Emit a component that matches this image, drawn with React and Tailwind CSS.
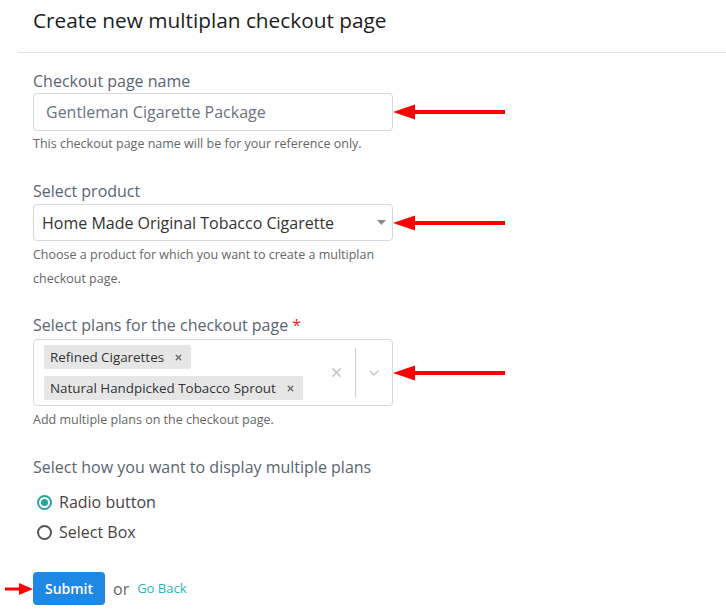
import { X, ChevronDown } from "lucide-react";

function Arrow({ width = 112 }) {
    return (
        <svg width={width} height="18" viewBox={`0 0 ${width} 18`} className="shrink-0">
            <path d={`M0 9 L22 1.5 L22 7 L${width} 7 L${width} 11 L22 11 L22 16.5 Z`} fill="#ff0000" />
        </svg>
    );
}

function Tag({ children }) {
    return (
        <div className="flex items-center bg-[#e6e6e6] rounded-[2px] h-[24px] pl-[6px] pr-[8px] text-[13.4px] leading-[24px] text-[#333]">
            <span>{children}</span>
            <X size={9} strokeWidth={3.5} className="ml-[10px] text-[#666]" />
        </div>
    );
}

export default function App() {
    return (
        <div className="w-[726px] h-[609px] bg-white overflow-hidden font-['Open_Sans',sans-serif]">
            <div className="pl-[33px] pt-[7px] h-[52px] text-[20.8px] leading-[26px] text-[#1a1d21]">
                Create new multiplan checkout page
            </div>
            <div className="ml-[18px] border-t border-[#e3e3e3]" />

            <div className="pl-[33px] pt-[18px]">
                <div className="text-[16px] text-[#5a6470] leading-[20px]">Checkout page name</div>
                <div className="flex items-center mt-[2px]">
                    <div className="w-[360px] h-[38px] border border-[#d9d9d9] rounded-[4px] flex items-center pl-[12px] text-[16px] text-[#6b7380]">
                        Gentleman Cigarette Package
                    </div>
                    <Arrow />
                </div>
                <div className="text-[12.5px] text-[#666] mt-[4px] leading-[18px]">
                    This checkout page name will be for your reference only.
                </div>

                <div className="text-[16px] text-[#5a6470] leading-[20px] mt-[28px]">Select product</div>
                <div className="flex items-center mt-[3px]">
                    <div className="w-[360px] h-[37px] border border-[#d9d9d9] rounded-[4px] flex items-center justify-between pl-[8px] pr-[6px] text-[16px] text-[#333]">
                        <span>Home Made Original Tobacco Cigarette</span>
                        <svg width="9" height="5" viewBox="0 0 9 5">
                            <path d="M0 0 L9 0 L4.5 5 Z" fill="#888" />
                        </svg>
                    </div>
                    <Arrow />
                </div>
                <div className="text-[12.5px] text-[#666] mt-[2px] leading-[24px] w-[350px]">
                    Choose a product for which you want to create a multiplan checkout page.
                </div>

                <div className="text-[16px] text-[#5a6470] leading-[20px] mt-[24px]">
                    Select plans for the checkout page <span className="text-[#e02b2b]">*</span>
                </div>
                <div className="flex items-center mt-[4px]">
                    <div className="w-[360px] h-[67px] border border-[#d9d9d9] rounded-[4px] flex items-center pl-[10px]">
                        <div className="flex-1 flex flex-col items-start gap-[7px]">
                            <Tag>Refined Cigarettes</Tag>
                            <Tag>Natural Handpicked Tobacco Sprout</Tag>
                        </div>
                        <X size={15} strokeWidth={2.5} className="text-[#c4c4c4] mr-[11px]" />
                        <div className="w-px h-[50px] bg-[#cfcfcf]" />
                        <ChevronDown size={16} strokeWidth={2} className="text-[#c4c4c4] mx-[10px]" />
                    </div>
                    <Arrow />
                </div>
                <div className="text-[12.5px] text-[#666] mt-[5px] leading-[18px]">
                    Add multiple plans on the checkout page.
                </div>

                <div className="text-[16px] text-[#5a6470] leading-[20px] mt-[28px]">
                    Select how you want to display multiple plans
                </div>
                <div className="flex items-center gap-[7px] mt-[15px] pl-[4px] text-[16px] leading-[20px] text-[#444]">
                    <span className="w-[15px] h-[15px] rounded-full border-2 border-[#26a69a] flex items-center justify-center">
                        <span className="w-[7px] h-[7px] rounded-full bg-[#26a69a]" />
                    </span>
                    Radio button
                </div>
                <div className="flex items-center gap-[7px] mt-[10px] pl-[4px] text-[16px] leading-[20px] text-[#444]">
                    <span className="w-[15px] h-[15px] rounded-full border-2 border-[#555]" />
                    Select Box
                </div>

                <div className="flex items-center mt-[30px] -ml-[28px]">
                    <svg width="28" height="14" viewBox="0 0 28 14">
                        <path d="M0 5.5 L14 5.5 L14 1 L28 7 L14 13 L14 8.5 L0 8.5 Z" fill="#ff0000" />
                    </svg>
                    <button className="w-[72px] h-[33px] rounded-[4px] bg-[#1e88e5] text-white text-[14px] font-semibold">
                        Submit
                    </button>
                    <span className="ml-[8px] text-[16px] text-[#666]">or</span>
                    <span className="ml-[8px] text-[13px] text-[#1fb5c7]">Go Back</span>
                </div>
            </div>
        </div>
    );
}
